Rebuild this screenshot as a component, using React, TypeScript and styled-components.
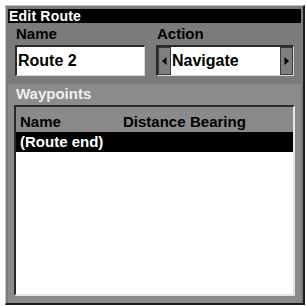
import React from "react";
import styled, { createGlobalStyle } from "styled-components";

const Global = createGlobalStyle`
  html, body { margin: 0; padding: 0; background: #ffffff; }
  body { font-family: "Liberation Sans", Arial, sans-serif; }
`;

const Frame = styled.div`
  box-sizing: border-box;
  margin: 5px 0 0 5px;
  width: 300px;
  height: 300px;
  background: #7b7b7b;
  border-top: 1px solid #c4c4c4;
  border-left: 1px solid #c4c4c4;
  border-right: 2px solid #1c1c1c;
  border-bottom: 2px solid #1c1c1c;
  padding: 3px 2px 0 2px;
  display: flex;
  flex-direction: column;
`;

const TitleBar = styled.div`
  height: 14px;
  background: #000;
  color: #fff;
  font-weight: bold;
  font-size: 14px;
  line-height: 15px;
  padding-left: 1px;
  letter-spacing: 0.2px;
  margin-bottom: -1px;
`;

const Fields = styled.div`
  display: grid;
  grid-template-columns: 130px 138px;
  column-gap: 11px;
  padding: 3px 7px 0 7px;
`;

const Label = styled.div`
  font-weight: bold;
  font-size: 15px;
  line-height: 17px;
  color: #000;
  margin-bottom: 3px;
  padding-left: 1px;
`;

const Field = styled.div`
  box-sizing: border-box;
  height: 31px;
  background: #fff;
  border-top: 2px solid #2a2a2a;
  border-left: 2px solid #2a2a2a;
  border-right: 1px solid #d8d8d8;
  border-bottom: 1px solid #d8d8d8;
  display: flex;
  align-items: stretch;
`;

const FieldText = styled.div`
  flex: 1;
  font-weight: bold;
  font-size: 16px;
  line-height: 28px;
  color: #000;
  padding-left: 1px;
  white-space: nowrap;
`;

const ArrowButton = styled.div`
  box-sizing: border-box;
  width: 13px;
  background: #7f7f7f;
  border: 1px solid #3a3a3a;
  display: flex;
  align-items: center;
  justify-content: center;
`;

const WaypointsPanel = styled.div`
  flex: 1;
  margin-top: 8px;
  background: #8b8b8b;
  display: flex;
  flex-direction: column;
  padding: 1px 6px 7px 6px;
`;

const PanelLabel = styled.div`
  font-weight: bold;
  font-size: 15px;
  line-height: 17px;
  color: #f0f0f0;
  padding-left: 2px;
  margin-bottom: 3px;
`;

const ListBox = styled.div`
  flex: 1;
  background: #fff;
  border-top: 2px solid #2a2a2a;
  border-left: 2px solid #2a2a2a;
  border-right: 2px solid #e6e6e6;
  border-bottom: 2px solid #e6e6e6;
  display: flex;
  flex-direction: column;
`;

const Row = styled.div<{ $selected?: boolean; $header?: boolean }>`
  display: grid;
  grid-template-columns: 103px 67px 1fr;
  padding: ${(p) => (p.$header ? "6px 0 2px 4px" : "0 0 0 4px")};
  background: ${(p) => (p.$header ? "#8a8a8a" : p.$selected ? "#000" : "#fff")};
  color: ${(p) => (p.$selected ? "#fff" : "#000")};
  font-weight: bold;
  font-size: 15px;
  line-height: ${(p) => (p.$header ? "17px" : "20px")};
  white-space: nowrap;
`;

const LeftArrow = () => (
  <svg width="5" height="8" viewBox="0 0 5 8">
    <polygon points="4.5,0 0,4 4.5,8" fill="#000" />
  </svg>
);

const RightArrow = () => (
  <svg width="5" height="8" viewBox="0 0 5 8">
    <polygon points="0.5,0 5,4 0.5,8" fill="#000" />
  </svg>
);

export default function App() {
  return (
    <>
      <Global />
      <Frame>
        <TitleBar>Edit Route</TitleBar>
        <Fields>
          <div>
            <Label>Name</Label>
            <Field>
              <FieldText>Route 2</FieldText>
            </Field>
          </div>
          <div>
            <Label>Action</Label>
            <Field>
              <ArrowButton>
                <LeftArrow />
              </ArrowButton>
              <FieldText>Navigate</FieldText>
              <ArrowButton>
                <RightArrow />
              </ArrowButton>
            </Field>
          </div>
        </Fields>
        <WaypointsPanel>
          <PanelLabel>Waypoints</PanelLabel>
          <ListBox>
            <Row $header>
              <span>Name</span>
              <span>Distance</span>
              <span>Bearing</span>
            </Row>
            <Row $selected>
              <span>(Route end)</span>
              <span></span>
              <span></span>
            </Row>
          </ListBox>
        </WaypointsPanel>
      </Frame>
    </>
  );
}
